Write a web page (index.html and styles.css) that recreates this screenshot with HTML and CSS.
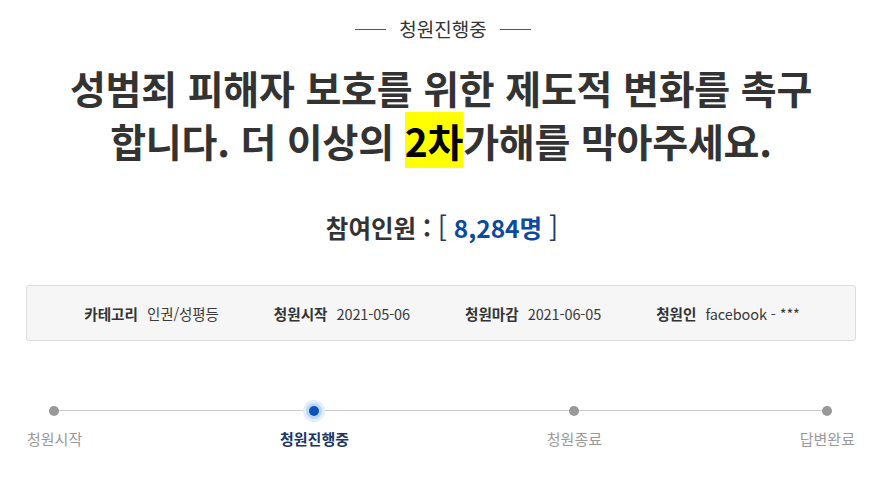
FILE: index.html
```html
<!DOCTYPE html>
<html lang="ko">
<head>
<meta charset="utf-8">
<link rel="stylesheet" href="styles.css">
</head>
<body>
<div class="page">
  <div class="status"><span class="dash"></span><span class="status-text">청원진행중</span><span class="dash"></span></div>
  <h1 class="title">성범죄 피해자 보호를 위한 제도적 변화를 촉구<br>합니다. 더 이상의 <span class="hl">2차</span>가해를 막아주세요.</h1>
  <div class="count"><span class="count-label">참여인원 : </span><span class="bracket">[</span> <span class="num">8,284명</span> <span class="bracket">]</span></div>
  <div class="info">
    <div class="item"><span class="label">카테고리</span><span class="value">인권/성평등</span></div>
    <div class="item"><span class="label">청원시작</span><span class="value">2021-05-06</span></div>
    <div class="item"><span class="label">청원마감</span><span class="value">2021-06-05</span></div>
    <div class="item"><span class="label">청원인</span><span class="value">facebook - ***</span></div>
  </div>
  <div class="steps">
    <div class="track"></div>
    <div class="step first"><span class="dot"></span><span class="step-label">청원시작</span></div>
    <div class="step active"><span class="dot"></span><span class="step-label">청원진행중</span></div>
    <div class="step"><span class="dot"></span><span class="step-label">청원종료</span></div>
    <div class="step last"><span class="dot"></span><span class="step-label">답변완료</span></div>
  </div>
</div>
</body>
</html>
```

FILE: styles.css
```css
* { box-sizing: border-box; }
html, body { margin: 0; padding: 0; background: #fff; }
body {
  font-family: "Noto Sans CJK KR", "Noto Sans", sans-serif;
  color: #333;
}
.page {
  width: 876px;
  padding: 0 20px 0 26px;
}
.status {
  display: flex;
  justify-content: center;
  align-items: center;
  gap: 13px;
  height: 30px;
  margin-top: 14px;
  padding-left: 4px;
}
.dash {
  display: block;
  width: 31px;
  height: 1px;
  background: #555;
}
.status-text {
  font-size: 19px;
  line-height: 30px;
  color: #333;
}
.title {
  margin: 17px 0 0;
  text-align: center;
  font-size: 39px;
  line-height: 53px;
  font-weight: 700;
  color: #333;
  letter-spacing: -0.2px;
}
.hl {
  background: #ffff00;
  color: #000;
}
.count {
  margin-top: 45px;
  text-align: center;
  font-size: 24.5px;
  font-weight: 700;
  line-height: 30px;
  color: #333;
  padding-left: 2px;
}
.bracket { color: #1f3866; font-weight: 400; font-size: 27px; }
.num { color: #0b4aa0; }
.info {
  margin-top: 42px;
  height: 56px;
  border: 1px solid #dcdcdc;
  border-radius: 3px;
  background: #f6f6f6;
  display: flex;
  justify-content: center;
  align-items: center;
  gap: 55px;
  padding-left: 2px;
  font-size: 14px;
}
.item { display: flex; gap: 9px; align-items: baseline; }
.label { font-weight: 700; color: #333; font-size: 14.6px; }
.value { color: #3a3a3a; font-size: 14.5px; letter-spacing: -0.1px; }
.steps {
  position: relative;
  margin-top: 56px;
  display: flex;
  justify-content: space-between;
  padding: 0 1px 0 1px;
}
.track {
  position: absolute;
  left: 26px;
  right: 28px;
  top: 13px;
  height: 1px;
  background: #c8c8c8;
}
.step {
  position: relative;
  display: flex;
  flex-direction: column;
  align-items: center;
}
.step.first .dot { margin-left: -2px; }
.dot {
  width: 10px;
  height: 10px;
  border-radius: 50%;
  background: #999;
  margin-top: 9px;
}
.active .dot {
  background: #0b55b8;
  box-shadow: 0 0 0 3px #bcd7f7, 0 0 0 6px #e3eefb;
}
.step-label {
  margin-top: 13px;
  font-size: 15px;
  line-height: 20px;
  color: #999;
}
.active .step-label { color: #1a3666; font-weight: 700; }
```
